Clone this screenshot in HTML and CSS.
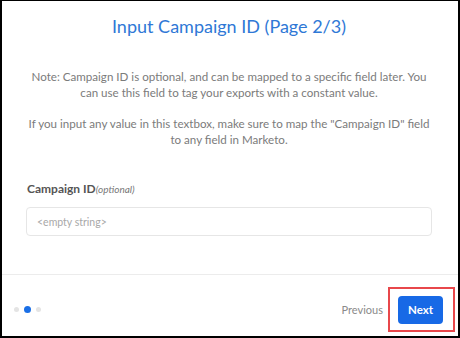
FILE: index.html
```html
<!DOCTYPE html>
<html lang="en">
<head>
  <meta charset="UTF-8">
  <meta name="viewport" content="width=device-width, initial-scale=1.0">
  <title>Input Campaign ID</title>
  <link rel="stylesheet" href="styles.css">
</head>
<body>
  <div class="frame">
    <div class="content">
      <h1 class="title">Input Campaign ID (Page 2/3)</h1>

      <p class="note">Note: Campaign ID is optional, and can be mapped to a specific field later. You<br>can use this field to tag your exports with a constant value.</p>
      <p class="note">If you input any value in this textbox, make sure to map the "Campaign ID" field<br>to any field in Marketo.</p>

      <label class="field-label" for="campaign-id">Campaign ID<span class="optional">(optional)</span></label>
      <input type="text" id="campaign-id" class="field-input" placeholder="<empty string>">
    </div>

    <div class="footer">
      <div class="dots">
        <span class="dot"></span>
        <span class="dot active"></span>
        <span class="dot"></span>
      </div>
      <div class="actions">
        <button type="button" class="btn-prev">Previous</button>
        <div class="highlight">
          <button type="button" class="btn-next">Next</button>
        </div>
      </div>
    </div>
  </div>
</body>
</html>
```

FILE: styles.css
```css
html, body {
  margin: 0;
  padding: 0;
  background: #fff;
}

.frame {
  width: 460px;
  height: 338px;
  box-sizing: border-box;
  border-style: solid;
  border-color: #000;
  border-width: 1px 2px 2px 2px;
  display: flex;
  flex-direction: column;
  font-family: Lato, "Noto Sans", sans-serif;
}

.content {
  flex: 1;
  padding: 0 26px 0 24px;
}

.title {
  margin: 12px 0 0 0;
  text-align: center;
  font-size: 18px;
  font-weight: 400;
  color: #2f78d6;
  line-height: 26px;
}

.note {
  margin: 30px -8px 0 -8px;
  text-align: center;
  white-space: nowrap;
  font-size: 11.6px;
  line-height: 16px;
  color: #7b7b7b;
}

.note + .note {
  margin-top: 15px;
}

.field-label {
  display: block;
  margin: 33px 0 0 1px;
  font-size: 12px;
  font-weight: 700;
  color: #555;
  line-height: 16px;
}

.optional {
  font-size: 10px;
  font-weight: 400;
  font-style: italic;
  color: #777;
}

.field-input {
  display: block;
  box-sizing: border-box;
  width: 406px;
  height: 29px;
  margin-top: 10px;
  padding: 0 10px;
  border: 1px solid #e6e6e6;
  border-radius: 4px;
  font-family: inherit;
  font-size: 10.5px;
}

.field-input::placeholder {
  color: #a8a8a8;
}

.footer {
  height: 61px;
  border-top: 1px solid #ececec;
  display: flex;
  align-items: center;
  justify-content: space-between;
  padding: 0 3px 0 12px;
}

.dots {
  display: flex;
  align-items: center;
  gap: 5px;
  margin-top: 7px;
}

.dot {
  width: 5px;
  height: 5px;
  border-radius: 50%;
  background: #e4e4e4;
}

.dot.active {
  width: 7px;
  height: 7px;
  background: #1a6fe6;
}

.actions {
  display: flex;
  align-items: center;
  margin-top: 7px;
}

.btn-prev {
  background: none;
  border: none;
  font-family: inherit;
  font-size: 11px;
  color: #8a8a8a;
  padding: 0;
  margin-right: 5px;
}

.highlight {
  border: 2px solid #e8474b;
  padding: 7px 10px 6px 8px;
}

.btn-next {
  width: 45px;
  height: 28px;
  background-color: #1769e6;
  color: #fff;
  border: none;
  border-radius: 4px;
  font-family: inherit;
  font-size: 11.5px;
  font-weight: 700;
  padding: 0;
}
```
